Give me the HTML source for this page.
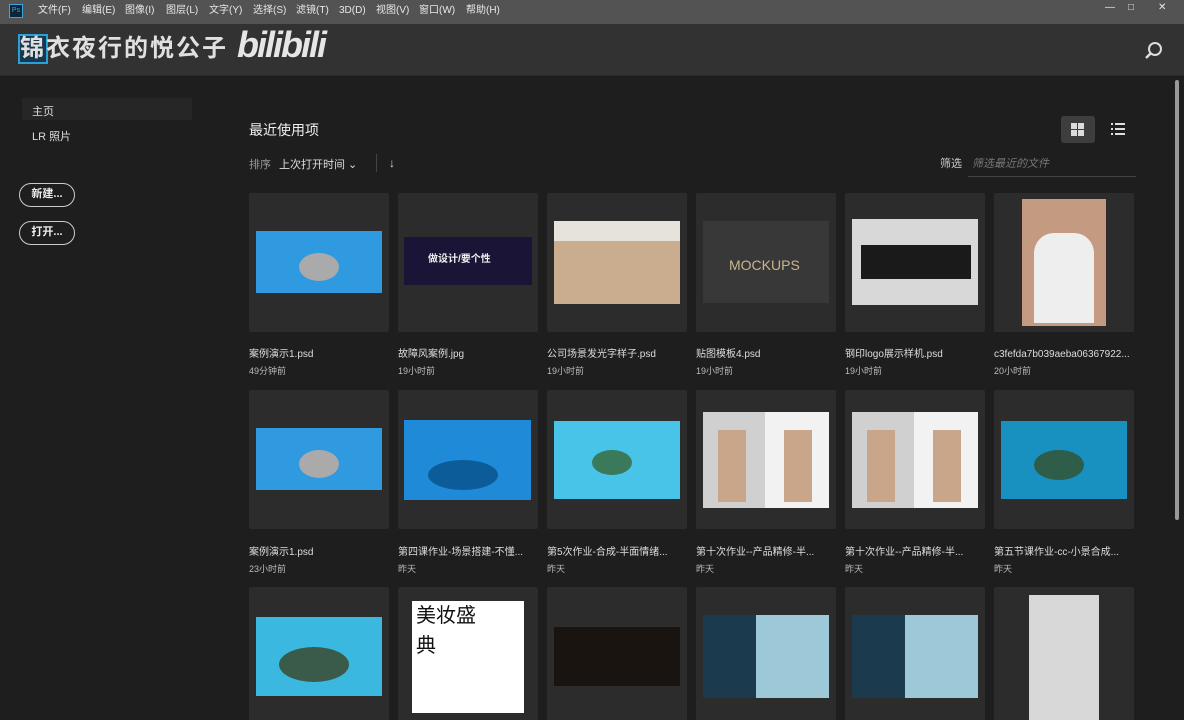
<!DOCTYPE html><html><head><meta charset="utf-8"><style>
*{margin:0;padding:0;box-sizing:border-box}
html,body{width:1184px;height:720px;overflow:hidden}
body{background:#1e1e1e;font-family:"Liberation Sans","Noto Sans CJK SC",sans-serif;color:#ddd;position:relative}
.abs{position:absolute}
#menu{left:0;top:0;width:1184px;height:24px;background:#535353;font-size:10px;color:#e8e8e8}
#menu span{position:absolute;top:5px;line-height:12px}
#hdr{left:0;top:24px;width:1184px;height:52px;background:#323232;border-bottom:1px solid #2a2a2a}
.card{position:absolute;width:140px;height:139px;background:#2c2c2c;border-radius:2px;overflow:hidden}
.card div{position:absolute}
.nm{position:absolute;font-size:10px;color:#ddd;white-space:nowrap;line-height:12px}
.tm{position:absolute;font-size:9px;color:#bbb;line-height:11px}
.btn{position:absolute;left:19px;width:56px;height:24px;border:1.5px solid #ccc;border-radius:12px;font-size:11px;font-weight:bold;color:#eee;text-align:center;line-height:21px}
</style></head><body>
<div id="menu" class="abs">
<div class="abs" style="left:9px;top:4px;width:14px;height:14px;background:#0b2638;border:1px solid #3ba6e0;color:#3ba6e0;font-size:7px;line-height:12px;text-align:center">Ps</div>
<span style="left:38px">文件(F)</span><span style="left:82px">编辑(E)</span><span style="left:125px">图像(I)</span><span style="left:166px">图层(L)</span><span style="left:209px">文字(Y)</span><span style="left:253px">选择(S)</span><span style="left:296px">滤镜(T)</span><span style="left:339px">3D(D)</span><span style="left:376px">视图(V)</span><span style="left:419px">窗口(W)</span><span style="left:466px">帮助(H)</span>
<span style="left:1105px;top:2px">—</span><span style="left:1128px;top:2px">□</span><span style="left:1158px;top:2px">✕</span>
</div>
<div id="hdr" class="abs">
<div class="abs" style="left:18px;top:10px;width:30px;height:30px;border:2px solid #2aa0d8;background:#17384d"></div>
<div class="abs" style="left:20px;top:10px;font-size:24px;line-height:30px;color:#e0e0e0;letter-spacing:2px;font-weight:bold">锦衣夜行的悦公子</div>
<div class="abs" style="left:237px;top:0px;font-size:36px;font-weight:bold;font-style:italic;color:#e6e6e6;letter-spacing:-2px">bilibili</div>
<svg class="abs" style="left:1144px;top:17px" width="20" height="20"><circle cx="11" cy="8" r="6" fill="none" stroke="#ddd" stroke-width="2"/><line x1="7" y1="12" x2="2" y2="17" stroke="#ddd" stroke-width="2.5"/></svg>
</div>
<div class="abs" style="left:1175px;top:80px;width:4px;height:440px;background:#9a9a9a;border-radius:2px"></div>
<div class="abs" style="left:22px;top:98px;width:170px;height:22px;background:#262626"></div>
<div class="abs" style="left:32px;top:103px;font-size:11px">主页</div>
<div class="abs" style="left:32px;top:128px;font-size:11px">LR 照片</div>
<div class="btn" style="top:183px">新建...</div>
<div class="btn" style="top:221px">打开...</div>
<div class="abs" style="left:249px;top:120px;font-size:14px;color:#f0f0f0">最近使用项</div>
<div class="abs" style="left:249px;top:156px;font-size:11px;color:#999">排序</div>
<div class="abs" style="left:279px;top:156px;font-size:11px;color:#ddd">上次打开时间 ⌄</div>
<div class="abs" style="left:376px;top:154px;width:1px;height:18px;background:#444"></div>
<div class="abs" style="left:389px;top:156px;font-size:12px;color:#ddd">↓</div>
<div class="abs" style="left:1061px;top:116px;width:34px;height:27px;background:#3e3e3e;border-radius:3px"></div>
<svg class="abs" style="left:1071px;top:123px" width="14" height="14"><rect x="0" y="0" width="6" height="6" fill="#ddd"/><rect x="7" y="0" width="6" height="6" fill="#ddd"/><rect x="0" y="7" width="6" height="6" fill="#ddd"/><rect x="7" y="7" width="6" height="6" fill="#ddd"/></svg>
<svg class="abs" style="left:1111px;top:123px" width="14" height="14"><g fill="#ddd"><rect x="0" y="0" width="2" height="2"/><rect x="4" y="0" width="10" height="2"/><rect x="0" y="5" width="2" height="2"/><rect x="4" y="5" width="10" height="2"/><rect x="0" y="10" width="2" height="2"/><rect x="4" y="10" width="10" height="2"/></g></svg>
<div class="abs" style="left:940px;top:155px;font-size:11px;color:#ccc">筛选</div>
<div class="abs" style="left:972px;top:155px;font-size:11px;color:#777;font-style:italic">筛选最近的文件</div>
<div class="abs" style="left:968px;top:176px;width:168px;height:1px;background:#444"></div>

<div class="card" style="left:249px;top:193px"><div style="left:7px;top:38px;width:126px;height:62px;background:#2f9ae0"></div><div style="left:50px;top:60px;width:40px;height:28px;background:#aaa;border-radius:50%"></div></div>
<div class="card" style="left:398px;top:193px"><div style="left:6px;top:44px;width:128px;height:48px;background:#1a1436"></div><div style="left:30px;top:57px;font-size:10px;color:#eee;font-weight:bold">做设计/要个性</div></div>
<div class="card" style="left:547px;top:193px"><div style="left:7px;top:28px;width:126px;height:83px;background:#c9ad8e"></div><div style="left:7px;top:28px;width:126px;height:20px;background:#e6e2dc"></div></div>
<div class="card" style="left:696px;top:193px"><div style="left:7px;top:28px;width:126px;height:82px;background:#383838"></div><div style="left:33px;top:64px;font-size:14px;color:#c9b58a">MOCKUPS</div></div>
<div class="card" style="left:845px;top:193px"><div style="left:7px;top:26px;width:126px;height:86px;background:#d8d8d8"></div><div style="left:16px;top:52px;width:110px;height:34px;background:#1a1a1a"></div></div>
<div class="card" style="left:994px;top:193px"><div style="left:28px;top:6px;width:84px;height:127px;background:#c49a80"></div><div style="left:40px;top:40px;width:60px;height:90px;background:#eee;border-radius:20px 20px 0 0"></div></div>
<div class="nm" style="left:249px;top:349px">案例演示1.psd</div><div class="tm" style="left:249px;top:366px">49分钟前</div>
<div class="nm" style="left:398px;top:349px">故障风案例.jpg</div><div class="tm" style="left:398px;top:366px">19小时前</div>
<div class="nm" style="left:547px;top:349px">公司场景发光字样子.psd</div><div class="tm" style="left:547px;top:366px">19小时前</div>
<div class="nm" style="left:696px;top:349px">贴图模板4.psd</div><div class="tm" style="left:696px;top:366px">19小时前</div>
<div class="nm" style="left:845px;top:349px">钢印logo展示样机.psd</div><div class="tm" style="left:845px;top:366px">19小时前</div>
<div class="nm" style="left:994px;top:349px">c3fefda7b039aeba06367922...</div><div class="tm" style="left:994px;top:366px">20小时前</div>

<div class="card" style="left:249px;top:390px"><div style="left:7px;top:38px;width:126px;height:62px;background:#2f9ae0"></div><div style="left:50px;top:60px;width:40px;height:28px;background:#aaa;border-radius:50%"></div></div>
<div class="card" style="left:398px;top:390px"><div style="left:6px;top:30px;width:127px;height:80px;background:#1f8ad8"></div><div style="left:30px;top:70px;width:70px;height:30px;background:#0d5c9a;border-radius:50%"></div></div>
<div class="card" style="left:547px;top:390px"><div style="left:7px;top:31px;width:126px;height:78px;background:#48c4e8"></div><div style="left:45px;top:60px;width:40px;height:25px;background:#3a7a5a;border-radius:50%"></div></div>
<div class="card" style="left:696px;top:390px"><div style="left:7px;top:22px;width:126px;height:96px;background:#f2f2f2"></div><div style="left:7px;top:22px;width:62px;height:96px;background:#d0d0d0"></div><div style="left:22px;top:40px;width:28px;height:72px;background:#c9a58a"></div><div style="left:88px;top:40px;width:28px;height:72px;background:#c9a58a"></div></div>
<div class="card" style="left:845px;top:390px"><div style="left:7px;top:22px;width:126px;height:96px;background:#f2f2f2"></div><div style="left:7px;top:22px;width:62px;height:96px;background:#d0d0d0"></div><div style="left:22px;top:40px;width:28px;height:72px;background:#c9a58a"></div><div style="left:88px;top:40px;width:28px;height:72px;background:#c9a58a"></div></div>
<div class="card" style="left:994px;top:390px"><div style="left:7px;top:31px;width:126px;height:78px;background:#1890c0"></div><div style="left:40px;top:60px;width:50px;height:30px;background:#2e5d4a;border-radius:50%"></div></div>
<div class="nm" style="left:249px;top:547px">案例演示1.psd</div><div class="tm" style="left:249px;top:564px">23小时前</div>
<div class="nm" style="left:398px;top:547px">第四课作业-场景搭建-不懂...</div><div class="tm" style="left:398px;top:564px">昨天</div>
<div class="nm" style="left:547px;top:547px">第5次作业-合成-半面情绪...</div><div class="tm" style="left:547px;top:564px">昨天</div>
<div class="nm" style="left:696px;top:547px">第十次作业--产品精修-半...</div><div class="tm" style="left:696px;top:564px">昨天</div>
<div class="nm" style="left:845px;top:547px">第十次作业--产品精修-半...</div><div class="tm" style="left:845px;top:564px">昨天</div>
<div class="nm" style="left:994px;top:547px">第五节课作业-cc-小景合成...</div><div class="tm" style="left:994px;top:564px">昨天</div>

<div class="card" style="left:249px;top:587px"><div style="left:7px;top:30px;width:126px;height:79px;background:#3ab8e0"></div><div style="left:30px;top:60px;width:70px;height:35px;background:#3a5a4a;border-radius:50%"></div></div>
<div class="card" style="left:398px;top:587px"><div style="left:14px;top:14px;width:112px;height:112px;background:#fff"></div><div style="left:18px;top:14px;font-size:20px;color:#111;line-height:30px;width:100px">美妆盛<br>典</div></div>
<div class="card" style="left:547px;top:587px"><div style="left:7px;top:40px;width:126px;height:59px;background:#1a1410"></div></div>
<div class="card" style="left:696px;top:587px"><div style="left:7px;top:28px;width:126px;height:83px;background:#1c3a4e"></div><div style="left:60px;top:28px;width:73px;height:83px;background:#9cc8d8"></div></div>
<div class="card" style="left:845px;top:587px"><div style="left:7px;top:28px;width:126px;height:83px;background:#1c3a4e"></div><div style="left:60px;top:28px;width:73px;height:83px;background:#9cc8d8"></div></div>
<div class="card" style="left:994px;top:587px"><div style="left:35px;top:8px;width:70px;height:125px;background:#d8d8d8"></div></div>
</body></html>
